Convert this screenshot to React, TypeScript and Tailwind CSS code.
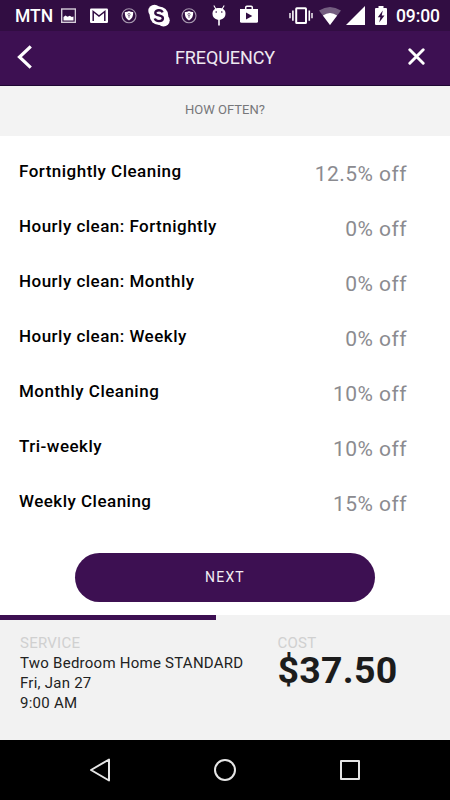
import type { ReactNode } from 'react';

interface Frequency {
  name: string;
  discount: string;
}

const frequencies: Frequency[] = [
  { name: 'Fortnightly Cleaning', discount: '12.5% off' },
  { name: 'Hourly clean: Fortnightly', discount: '0% off' },
  { name: 'Hourly clean: Monthly', discount: '0% off' },
  { name: 'Hourly clean: Weekly', discount: '0% off' },
  { name: 'Monthly Cleaning', discount: '10% off' },
  { name: 'Tri-weekly', discount: '10% off' },
  { name: 'Weekly Cleaning', discount: '15% off' },
];

// Status bar glyphs are all as tall as the bar itself
function StatusIcon({ width, className = '', children }: { width: number; className?: string; children: ReactNode }) {
  return (
    <svg width={width} height={31} viewBox={`0 0 ${width} 31`} fill="#fff" className={`shrink-0 ${className}`}>
      {children}
    </svg>
  );
}

function ShieldIcon({ className }: { className?: string }) {
  return (
    <StatusIcon width={16} className={className}>
      <circle cx="8" cy="15.8" r="7" fill="none" stroke="#a596ad" strokeWidth="1.1" />
      <path d="M8 11c1.300.8 2.600 1 4.200 1 .2 4.100-1.200 6.900-4.200 8.500-3-1.600-4.400-4.400-4.200-8.500 1.600 0 2.900-.2 4.200-1z" />
      <circle cx="8" cy="14.500" r="1.100" fill="none" stroke="#6b5277" strokeWidth=".8" />
      <path d="M8 15.800v2" stroke="#6b5277" strokeWidth=".9" />
    </StatusIcon>
  );
}

function StatusBar() {
  return (
    <div className="flex h-[31px] shrink-0 items-center bg-[#310d42] pl-[15px] text-white">
      <span className="w-[46px] shrink-0 pt-[3px] text-[17.5px] font-medium leading-none">MTN</span>
      <StatusIcon width={15}>
        <rect x=".7" y="9" width="13.700" height="13.300" fill="none" stroke="#d5cdd9" strokeWidth="1.400" />
        <path d="M2.500 20.500v-3.500l2-1.500 2 1.200 2.300-1 2 1.300 1.700-.5v4z" />
      </StatusIcon>
      <StatusIcon width={18} className="ml-[14px]">
        <rect y="8.500" width="18" height="14.500" rx="1.200" />
        <path d="M3.200 21V11.500L9 16l5.800-4.500V21" fill="none" stroke="#310d42" strokeWidth="1.500" />
      </StatusIcon>
      <ShieldIcon className="ml-[13px]" />
      <StatusIcon width={22} className="ml-[11px]">
        <circle cx="6.500" cy="11" r="6.200" />
        <circle cx="15.500" cy="20.300" r="6.200" />
        <circle cx="11" cy="15.700" r="9.300" />
        <path
          d="M14.600 12.400c-.6-1.600-1.800-2.200-3.700-2.200-2.200 0-3.600 1-3.600 2.700 0 3.500 7.600 1.500 7.600 5.300 0 1.900-1.600 2.900-3.900 2.900-2.200 0-3.700-.8-4.200-2.600"
          fill="none"
          stroke="#310d42"
          strokeWidth="2.400"
        />
      </StatusIcon>
      <ShieldIcon className="ml-[11px]" />
      <StatusIcon width={14} className="ml-[15px]">
        <path d="M1.800 5.500l2.200 3.700M12.200 5.500L10 9.200" stroke="#fff" strokeWidth="1.100" />
        <path d="M.5 13.500C.5 9.900 3.200 8 7 8s6.500 1.900 6.500 5.500c0 3.900-2.700 6.300-6.500 6.300S.5 17.400.5 13.500z" />
        <path d="M6.200 19h1.600v6.500H6.200z" />
        <circle cx="4.200" cy="12" r=".8" fill="#310d42" />
        <circle cx="9.800" cy="12" r=".8" fill="#310d42" />
      </StatusIcon>
      <StatusIcon width={18} className="ml-[14px]">
        <path d="M5.700 9.500V7.500q0-1.200 1.200-1.200h4.200q1.200 0 1.200 1.200v2" fill="none" stroke="#fff" strokeWidth="1.500" />
        <path d="M0 9h18v12.300q0 1.500-1.500 1.500h-15q-1.500 0-1.500-1.500z" />
        <path d="M6 12.500l6.300 3.500L6 19.500z" fill="#310d42" />
      </StatusIcon>
      <StatusIcon width={24} className="ml-[31px]">
        <rect x="7.200" y="8.300" width="9.800" height="14.700" rx=".6" fill="none" stroke="#fff" strokeWidth="2" />
        <path d="M3.900 10.500v10.300M20.300 10.500v10.300" stroke="#fff" strokeWidth="1.600" />
        <path d="M1 13v5.200M23 13v5.200" stroke="#fff" strokeWidth="1.400" />
      </StatusIcon>
      <StatusIcon width={22} className="ml-[6px]">
        <path d="M0 10.500Q11 3.500 22 10.500L11 25z" fill="#745e80" />
        <path d="M3.900 15.500Q11 10.500 18.100 15.500L11 25z" />
      </StatusIcon>
      <StatusIcon width={19} className="ml-[5px]">
        <path d="M19 6v19H0z" />
      </StatusIcon>
      <StatusIcon width={12} className="ml-[10px]">
        <path d="M3.500 6h5v2H11q1 0 1 1v15q0 1-1 1H1q-1 0-1-1V9q0-1 1-1h2.500z" />
        <path d="M7.800 10.500L2.800 17.200h2.600L4.200 22.500l5.300-7H6.700z" fill="#310d42" />
      </StatusIcon>
      <span className="ml-[9px] pt-[3px] text-[17.5px] font-medium leading-none tracking-[-0.1px]">09:00</span>
    </div>
  );
}

function Header() {
  return (
    <header className="flex h-[55px] shrink-0 items-center justify-between border-b border-[#1f0733] bg-[#3d1052] pl-[17px] pr-[25px]">
      <svg width="15" height="24" viewBox="0 0 15 24" fill="none" stroke="#fff" strokeWidth="3.200" strokeLinecap="square" className="mb-[2px]">
        <path d="M12.600 2.500L2.500 12l10.100 9.500" />
      </svg>
      <h1 className="pl-[10px] text-[18px] leading-none tracking-[-0.1px] text-[#eee8f0]">FREQUENCY</h1>
      <svg width="17" height="17" viewBox="0 0 17 17" fill="none" stroke="#fff" strokeWidth="2.900" strokeLinecap="round" className="mb-[4px]">
        <path d="M1.800 1.800l13.400 13.400M15.200 1.800L1.800 15.200" />
      </svg>
    </header>
  );
}

function FrequencyRow({ name, discount }: Frequency) {
  return (
    <li className="flex h-[55px] items-center justify-between pl-[19px] pr-[43px]">
      <span className="text-[17px] font-medium tracking-[0.48px] text-black">{name}</span>
      <span className="pt-[6px] text-[21px] tracking-[0.45px] text-[#8b8b90]">{discount}</span>
    </li>
  );
}

function Summary() {
  return (
    <footer className="h-[125px] shrink-0 bg-[#f2f2f2]">
      <div className="h-[5px] w-[216px] bg-[#3d1052]" />
      <div className="flex pl-5 pt-[13px]">
        <div className="w-[257.5px] text-[15px] leading-5 tracking-[0.25px] text-[#222]">
          <p className="text-[#d0d0d0]">SERVICE</p>
          <p>Two Bedroom Home STANDARD</p>
          <p>Fri, Jan 27</p>
          <p>9:00 AM</p>
        </div>
        <div>
          <p className="text-[15px] leading-5 tracking-[0.25px] text-[#d0d0d0]">COST</p>
          <p className="text-[37.5px] font-bold leading-[34px] tracking-[0.25px] text-[#1c1c1c]">$37.50</p>
        </div>
      </div>
    </footer>
  );
}

function NavigationBar() {
  return (
    <nav className="flex h-[60px] shrink-0 items-center justify-between bg-black px-[88px]">
      <svg width="24" height="26" viewBox="0 0 24 26" fill="none" stroke="#e6e6e6" strokeWidth="2" strokeLinejoin="round">
        <path d="M21 2.500v21L3 13z" />
      </svg>
      <svg width="24" height="24" viewBox="0 0 24 24" fill="none" stroke="#e6e6e6" strokeWidth="2">
        <circle cx="12" cy="12" r="10" />
      </svg>
      <svg width="24" height="24" viewBox="0 0 24 24" fill="none" stroke="#e6e6e6" strokeWidth="2" strokeLinejoin="round">
        <rect x="3" y="3" width="18" height="18" />
      </svg>
    </nav>
  );
}

export default function App() {
  return (
    <div className="flex h-[800px] w-[450px] flex-col overflow-hidden bg-white font-['Roboto',sans-serif]">
      <StatusBar />
      <Header />
      <div className="h-[50px] shrink-0 bg-[#f3f3f3] pt-[15px] text-center text-[13px] leading-[17px] text-[#77777a]">
        HOW OFTEN?
      </div>
      <main className="flex flex-1 flex-col items-center pt-[8px]">
        <ul className="w-full">
          {frequencies.map((frequency) => (
            <FrequencyRow key={frequency.name} {...frequency} />
          ))}
        </ul>
        <button className="mt-[24px] h-[49px] w-[300px] rounded-full bg-[#3d1052] text-[14px] tracking-[1.2px] text-[#f2edf4]">
          NEXT
        </button>
      </main>
      <Summary />
      <NavigationBar />
    </div>
  );
}
